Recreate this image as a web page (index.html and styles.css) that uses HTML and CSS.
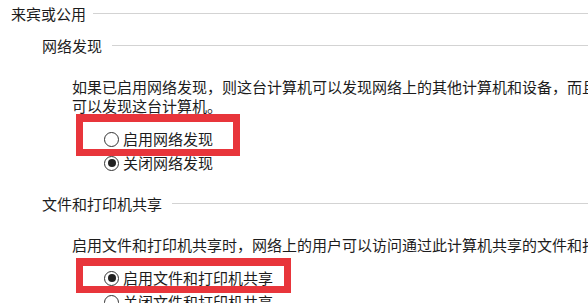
FILE: index.html
```html
<!DOCTYPE html>
<html lang="zh-CN">
<head>
<meta charset="utf-8">
<link rel="stylesheet" href="styles.css">
</head>
<body>
<div class="page">
  <div class="group-head lvl1"><span>来宾或公用</span><i class="rule"></i></div>

  <div class="group-head lvl2 first"><span>网络发现</span><i class="rule"></i></div>
  <div class="desc">
    <div class="ln">如果已启用网络发现，则这台计算机可以发现网络上的其他计算机和设备，而且其他网络计算机亦</div>
    <div class="ln">可以发现这台计算机。</div>
  </div>
  <div class="options">
    <label class="opt"><span class="radio"></span>启用网络发现</label>
    <label class="opt"><span class="radio on"></span>关闭网络发现</label>
  </div>

  <div class="group-head lvl2 second"><span>文件和打印机共享</span><i class="rule"></i></div>
  <div class="desc two">
    <div class="ln">启用文件和打印机共享时，网络上的用户可以访问通过此计算机共享的文件和打印机。</div>
  </div>
  <div class="options">
    <label class="opt"><span class="radio on"></span>启用文件和打印机共享</label>
    <label class="opt"><span class="radio"></span>关闭文件和打印机共享</label>
  </div>

  <div class="mark mark-a"></div>
  <div class="mark mark-b"></div>
</div>
</body>
</html>
```
FILE: styles.css
```css
html, body {
  margin: 0;
  padding: 0;
  background: #ffffff;
  overflow: hidden;
}
body {
  width: 588px;
  height: 303px;
  font-family: "Noto Sans CJK SC", "Noto Sans", sans-serif;
  font-size: 15px;
  color: #1c1c1c;
}
.page {
  position: relative;
  padding-top: 4px;
  width: 588px;
  height: 299px;
}
.group-head {
  display: flex;
  align-items: center;
  height: 20px;
  line-height: 20px;
  white-space: nowrap;
}
.group-head .rule {
  flex: 1;
  height: 1px;
  background: #d3d3d3;
  margin-top: -2px;
}
.lvl1 { padding-left: 11px; }
.lvl1 .rule { margin-left: 7px; }
.lvl2 { padding-left: 42px; }
.lvl2 .rule { margin-left: 10px; }
.lvl2.first { margin-top: 12px; }
.lvl2.second { margin-top: 19px; }
.desc {
  padding-left: 72px;
  margin-top: 21px;
  line-height: 19px;
  white-space: nowrap;
}
.desc.two { margin-top: 21px; }
.options {
  margin-top: 12px;
  padding-left: 104px;
}
.opt {
  display: flex;
  align-items: center;
  height: 24px;
  line-height: 24px;
  white-space: nowrap;
}
.radio {
  box-sizing: border-box;
  width: 15px;
  height: 15px;
  border: 1px solid #333333;
  border-radius: 50%;
  margin-right: 4px;
  display: flex;
  align-items: center;
  justify-content: center;
  background: #fff;
}
.radio.on::after {
  content: "";
  width: 8px;
  height: 8px;
  border-radius: 50%;
  background: #222222;
}
.mark {
  position: absolute;
  box-sizing: border-box;
  border: 7px solid #e8353b;
  border-top-width: 8px;
}
.mark-a {
  left: 76px;
  top: 114px;
  width: 164px;
  height: 42px;
}
.mark-b {
  left: 76px;
  top: 258px;
  width: 215px;
  height: 35px;
}
```
